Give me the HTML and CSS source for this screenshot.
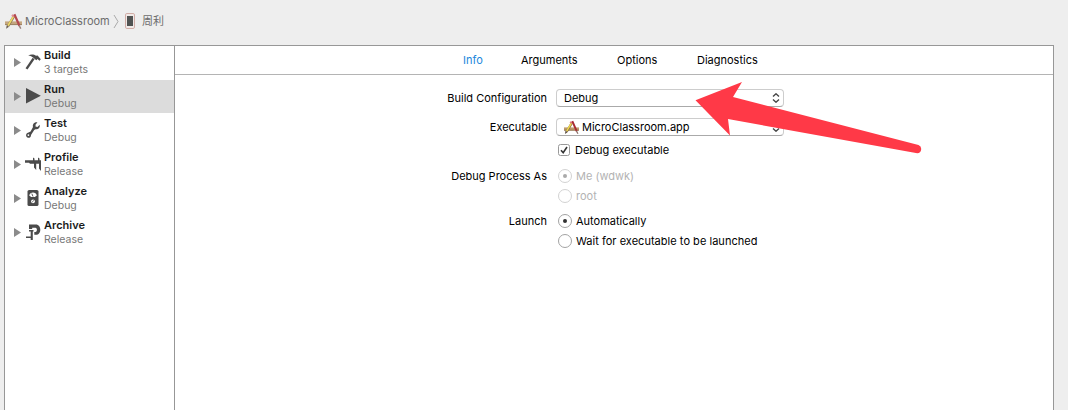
FILE: index.html
```html
<!DOCTYPE html>
<html lang="en">
<head>
<meta charset="utf-8">
<title>Scheme editor</title>
<link rel="stylesheet" href="styles.css">
</head>
<body>
<svg class="defs" width="0" height="0">
  <symbol id="app" viewBox="0 0 17 17">
    <path d="M0 8.4h17v3.4H0z" fill="#bd9a6c"/><path d="M0 11.6h17" stroke="#7d5f38" stroke-width=".8"/>
    <path d="M8.9 3.4L3 13.2" stroke="#80663a" stroke-width="2.6"/>
    <path d="M8.5 3.4L3 12.6" stroke="#efd84f" stroke-width="1.7"/>
    <path d="M6.8 2.2l2.2 1.2" stroke="#df7b81" stroke-width="2"/>
    <path d="M1.7 12.2l-.6 3.6 2.9-2z" fill="#56483b"/>
    <path d="M9.4 1.2l5 11.5" stroke="#a92b32" stroke-width="2.2"/>
    <path d="M14 12.3l1.8 3.3" stroke="#8b6f68" stroke-width="1.4"/>
  </symbol>
</svg>
<nav class="path">
  <svg class="app-icon" width="17" height="17"><use href="#app"/></svg>
  <span class="path-app">MicroClassroom</span>
  <svg class="chevron" width="6" height="15" viewBox="0 0 6 15"><path d="M1 1l4 6.5L1 14" fill="none" stroke="#aaa"/></svg>
  <svg class="phone" width="10" height="16" viewBox="0 0 10 16"><rect x=".5" y=".5" width="9" height="15" rx="1.4" fill="#f0e9e7" stroke="#d0aca6"/><path d="M2 3h6v10H2z" fill="#505352"/></svg>
  <span class="path-device">周利</span>
</nav>
<main class="panel">
  <aside class="sidebar">
    <div class="action">
      <i class="disclosure"></i>
      <svg class="icon" viewBox="0 0 16 18"><path d="M8.6 5.5L1.5 15.8" stroke="#4b4b4b" stroke-width="2.3"/><path d="M3.2 2.4C6 .8 9.2 1.2 11 2.8l1.6-.4 3.2 3.8-1.3 1.6-2-1.7-1.2 1.1-3.2-2.6C7.2 3.4 5.4 2.6 3.2 2.4z" fill="#4b4b4b"/></svg>
      <div class="copy"><b>Build</b><span>3 targets</span></div>
    </div>
    <div class="action selected">
      <i class="disclosure"></i>
      <svg class="icon" viewBox="0 0 16 18"><path d="M1 1v15.4l14.8-7.7z" fill="#4b4b4b"/></svg>
      <div class="copy"><b>Run</b><span>Debug</span></div>
    </div>
    <div class="action">
      <i class="disclosure"></i>
      <svg class="icon" viewBox="0 0 16 18"><path d="M12.4 1.4C9.4.7 7.2 3.3 8 6L5.6 10.4 3 11.8c-2.2.5-2.6 3.6-.6 4.7 2 .9 3.9-.6 3.6-2.6l3.2-5 1.3-.6c2.8.4 5-1.8 4.1-4.6L12.5 6l-2-.6.1-1.9z" fill="#4b4b4b"/><circle cx="3.4" cy="14.1" r=".9" fill="#fff"/></svg>
      <div class="copy"><b>Test</b><span>Debug</span></div>
    </div>
    <div class="action">
      <i class="disclosure"></i>
      <svg class="icon" viewBox="0 0 16 18"><path d="M0 5.2h8V2.5l1.5 1v1.7H13V2.5l1.5 1v1.7H16V16l-2-2.6V8.8h-2.8V15L9 12.4V8.8H5L4 7.8H0z" fill="#4b4b4b"/></svg>
      <div class="copy"><b>Profile</b><span>Release</span></div>
    </div>
    <div class="action">
      <i class="disclosure"></i>
      <svg class="icon" viewBox="0 0 16 18"><rect x="2.5" y="1" width="11" height="16" rx="1.6" fill="#4b4b4b"/><path d="M4.2 6.5c.7-4 6.9-4 7.6 0L9.8 8H6.2z" fill="#fff"/><path d="M8 7.5L6.8 4.6" stroke="#4b4b4b" stroke-width=".9"/><circle cx="8" cy="12.3" r="1.9" fill="#fff"/><path d="M7.1 13.1l1.8-1.7" stroke="#4b4b4b" stroke-width=".8"/></svg>
      <div class="copy"><b>Analyze</b><span>Debug</span></div>
    </div>
    <div class="action">
      <i class="disclosure"></i>
      <svg class="icon" viewBox="0 0 16 18"><path d="M4 6V1.5h6.8c6 0 6 10.3 0 10.3H9.3V8.9h1.1c2 0 2-4.2 0-4.2H7.2V6zM4 7h4.5v1.6H7.8V17H5.7v-2H1v-1.4h4.7v-5H4z" fill="#4b4b4b"/></svg>
      <div class="copy"><b>Archive</b><span>Release</span></div>
    </div>
  </aside>
  <section class="content">
    <div class="tabs">
      <span class="tab active">Info</span><span class="tab">Arguments</span><span class="tab">Options</span><span class="tab">Diagnostics</span>
    </div>
    <div class="form">
      <div class="row config"><label>Build Configuration</label><div class="select"><span>Debug</span><svg class="arrows" viewBox="0 0 8 10"><path d="M1 3.5L4 .8l3 2.7M1 6.5l3 2.7 3-2.7"/></svg></div></div>
      <div class="row exec"><label>Executable</label><div class="select"><svg class="app-small" width="15" height="15"><use href="#app"/></svg><span>MicroClassroom.app</span><svg class="arrows" viewBox="0 0 8 10"><path d="M1 3.5L4 .8l3 2.7M1 6.5l3 2.7 3-2.7"/></svg></div></div>
      <div class="row check"><label></label><div class="option"><svg class="checkbox" viewBox="0 0 12 12"><rect x=".5" y=".5" width="11" height="11" rx="2" fill="#fff" stroke="#999"/><path d="M3 6.2l2.2 2.5L9 3" fill="none" stroke="#333" stroke-width="1.6"/></svg><span>Debug executable</span></div></div>
      <div class="row process"><label>Debug Process As</label><div class="option disabled"><i class="radio on"></i><span>Me (wdwk)</span></div></div>
      <div class="row"><label></label><div class="option disabled"><i class="radio"></i><span>root</span></div></div>
      <div class="row launch"><label>Launch</label><div class="option"><i class="radio on"></i><span>Automatically</span></div></div>
      <div class="row"><label></label><div class="option"><i class="radio"></i><span class="wait">Wait for executable to be launched</span></div></div>
    </div>
  </section>
</main>
<svg class="pointer" width="227" height="72" viewBox="695 82 227 72"><path d="M695.5 100.2L742 82l-9 15 185.5 48.1a4.2 4.2 0 0 1-1.2 8.1L728 119l2 16.6z" fill="#ff3947"/></svg>
</body>
</html>
```
FILE: styles.css
```css
* { box-sizing: border-box; }
body {
  margin: 0;
  height: 410px;
  overflow: hidden;
  background: #eee;
  color: #000;
  font: 11px/18px Inter, "Noto Sans CJK SC", sans-serif;
  display: flex;
  flex-direction: column;
  position: relative;
}
.defs { position: absolute; }
svg { display: block; flex: none; }
span, b, label { white-space: nowrap; }
.path { height: 45px; flex: none; display: flex; align-items: center; padding: 0 0 3px 5px; color: #6c6c6c; }
.app-icon { opacity: .85; }
.path-app { width: 84px; margin-left: 3px; }
.chevron { margin-left: 4px; }
.phone { margin-left: 6px; }
.path-device { margin-left: 7px; }
.panel { flex: 1; width: 1050px; margin-left: 4px; display: flex; background: #fff; border: solid #979797; border-width: 1px 1px 0; }
.sidebar { width: 170px; flex: none; border-right: 1px solid #979797; }
.action { height: 34px; display: flex; align-items: center; padding: 0 0 2px 9px; }
.selected { background: #dcdcdc; height: 33px; margin-bottom: 1px; padding-bottom: 1px; }
.disclosure { width: 7px; height: 9px; flex: none; background: #8b8b8b; clip-path: polygon(0 0, 100% 50%, 0 100%); margin-top: 1px; }
.icon { width: 16px; height: 18px; margin-left: 4px; }
.copy { height: 29px; display: flex; flex-direction: column; gap: 1px; margin-left: 3px; line-height: 14px; }
.copy b { font-weight: 600; color: #1b1b1b; }
.copy span { color: #777; font-size: 10.5px; }
.content { flex: 1; }
.tabs { height: 29px; border-bottom: 1px solid #b4b4b4; display: grid; grid-template-columns: 58px 96px 80px 80px; align-items: center; padding-left: 288px; }
.active { color: #2287dc; }
.form { padding-top: 14px; }
.row { display: grid; grid-template-columns: 372px 228px; column-gap: 9px; height: 18px; margin-bottom: 2px; }
.row label { text-align: right; }
.config { margin-bottom: 11px; }
.exec { margin-bottom: 5px; }
.check { margin-bottom: 8px; }
.launch { margin-top: 7px; }
.select { display: flex; align-items: center; height: 18px; border: 1px solid #cdcdcd; border-bottom-color: #aaa; border-radius: 4px; padding: 0 3px 0 7px; line-height: 16px; }
.app-small { margin-right: 3px; }
.arrows { width: 8px; height: 10px; margin-left: auto; fill: none; stroke: #444; stroke-width: 1.4; }
.option { display: flex; align-items: center; padding-left: 2px; }
.checkbox { width: 12px; height: 12px; margin-right: 5px; }
.wait { letter-spacing: .03px; }
.radio { width: 14px; height: 14px; border: 1px solid #a3a3a3; border-radius: 50%; margin-right: 4px; flex: none; display: grid; place-items: center; }
.on::before { content: ""; width: 4px; height: 4px; border-radius: 50%; background: #333; }
.disabled { color: #b3b3b3; }
.disabled .radio { border-color: #d2d2d2; }
.disabled .on::before { background: #aaa; }
.pointer { position: absolute; left: 695px; top: 82px; }
```
